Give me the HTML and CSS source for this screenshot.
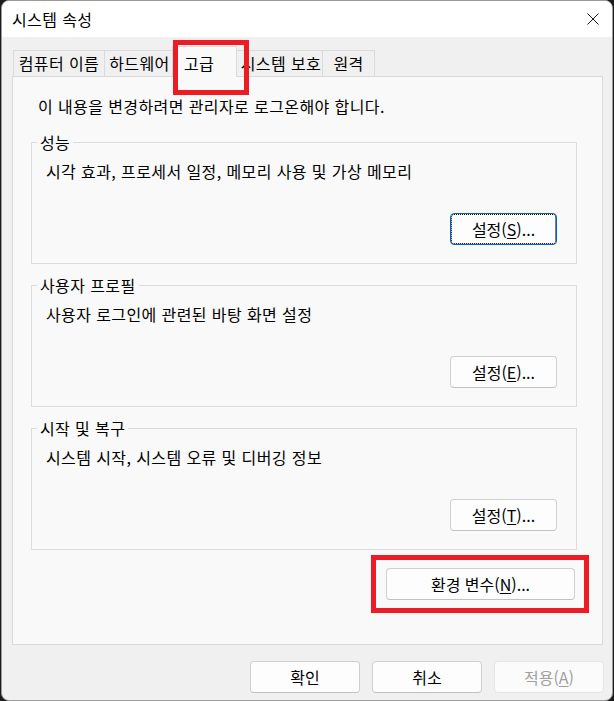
FILE: index.html
```html
<!DOCTYPE html>
<html lang="ko">
  <head>
    <meta charset="UTF-8" />
    <meta name="viewport" content="width=device-width, initial-scale=1.0" />
    <title>시스템 속성</title>
    <link rel="stylesheet" href="styles.css">
  </head>
  <body>
    <div class="window">
      <div class="titleBar">
        <span class="title">시스템 속성</span>
        <button class="closeBtn" aria-label="닫기">
          <svg width="12" height="12" viewBox="0 0 12 12">
            <path d="M0.5 0.5 L11.5 11.5 M11.5 0.5 L0.5 11.5" stroke="#1a1a1a" stroke-width="1" fill="none" />
          </svg>
        </button>
      </div>
      <div class="content">
        <div class="tabs">
          <div class="tab tabComputer">컴퓨터 이름</div>
          <div class="tab tabHardware">하드웨어</div>
          <div class="tab tabAdvanced active">고급</div>
          <div class="tab tabProtect">시스템 보호</div>
          <div class="tab tabRemote">원격</div>
        </div>
        <section class="panel">
          <p class="notice">이 내용을 변경하려면 관리자로 로그온해야 합니다.</p>
          <fieldset class="group">
            <legend>성능</legend>
            <p class="desc">시각 효과, 프로세서 일정, 메모리 사용 및 가상 메모리</p>
            <div class="groupActions">
              <button class="btn setBtn focused">설정(<u>S</u>)...</button>
            </div>
          </fieldset>
          <fieldset class="group">
            <legend>사용자 프로필</legend>
            <p class="desc">사용자 로그인에 관련된 바탕 화면 설정</p>
            <div class="groupActions">
              <button class="btn setBtn">설정(<u>E</u>)...</button>
            </div>
          </fieldset>
          <fieldset class="group">
            <legend>시작 및 복구</legend>
            <p class="desc">시스템 시작, 시스템 오류 및 디버깅 정보</p>
            <div class="groupActions">
              <button class="btn setBtn">설정(<u>T</u>)...</button>
            </div>
          </fieldset>
          <div class="envRow">
            <div class="highlight">
              <button class="btn envBtn">환경 변수(<u>N</u>)...</button>
            </div>
          </div>
        </section>
        <div class="footer">
          <button class="btn footBtn">확인</button>
          <button class="btn footBtn">취소</button>
          <button class="btn footBtn" disabled>적용(<u>A</u>)</button>
        </div>
      </div>
    </div>
  </body>
</html>
```

FILE: styles.css
```css
* {
  margin: 0;
  padding: 0;
  box-sizing: border-box;
  font-family: "Noto Sans CJK KR", "Noto Sans", sans-serif;
}

body {
  background-color: #1c1c1c;
  height: 100vh;
  overflow: hidden;
}

.window {
  width: 612px;
  height: 701px;
  margin-left: 1px;
  border: 1px solid #9b9b9b;
  border-radius: 8px;
  background-color: #f0f0f0;
  overflow: hidden;
  font-size: 16px;
  letter-spacing: 0.4px;
  line-height: 20px;
  color: #000;
  display: flex;
  flex-direction: column;
}

.titleBar {
  height: 36px;
  background-color: #fff;
  display: flex;
  align-items: center;
  justify-content: space-between;
  padding: 0 13px 0 10px;
}

.closeBtn {
  border: none;
  background: none;
  width: 12px;
  height: 12px;
  display: flex;
}

.content {
  flex: 1;
  padding: 9px 9px 0 10px;
}

/* tabs */
.tabs {
  display: flex;
  align-items: flex-end;
  height: 30px;
  margin-left: 1px;
}

.tab {
  height: 26px;
  border: 1px solid #dadada;
  border-bottom: none;
  background-color: #f0f0f0;
  text-align: center;
  line-height: 25px;
  white-space: nowrap;
  margin-left: -1px;
}

.tabComputer {
  width: 92px;
  margin-left: 0;
}

.tabHardware {
  width: 71px;
}

.tabProtect {
  width: 89px;
  padding-left: 5px;
}

.tabRemote {
  width: 53px;
}

.tab.active {
  position: relative;
  z-index: 1;
  width: 65px;
  height: 31px;
  margin: 0 -2px -1px -3px;
  background-color: #f9f9f9;
  text-align: left;
  padding: 6px 0 0 11px;
  line-height: 20px;
}

.tab.active::after {
  content: "";
  position: absolute;
  left: 0;
  top: -7px;
  width: 66px;
  height: 45px;
  border: 5px solid #ed1c24;
}

/* panel */
.panel {
  height: 569px;
  border: 1px solid #dadada;
  background-color: #f9f9f9;
  padding: 19px 25px 0 18px;
}

.notice {
  margin-left: 7px;
}

.group {
  border: 1px solid #dcdcdc;
  padding: 9px 19px 18px 5px;
  margin-top: 11px;
  & legend {
    padding: 0 3px;
  }
}

.notice + .group {
  margin-top: 16px;
}

.desc {
  margin-left: 9px;
}

.groupActions {
  display: flex;
  justify-content: flex-end;
  margin-top: 32px;
}

.btn {
  height: 32px;
  border: 1px solid #d0d0d0;
  border-bottom-color: #c2c2c2;
  border-radius: 4px;
  background-color: #fdfdfd;
  color: #000;
  font-size: 16px;
  letter-spacing: 0;
  line-height: 20px;
  white-space: nowrap;
  & u {
    text-underline-offset: 2px;
  }
}

.setBtn {
  width: 107px;
}

.btn.focused {
  border: 1px solid #0067c0;
  outline: 1px dotted #000;
  outline-offset: -2px;
}

.envRow {
  display: flex;
  justify-content: flex-end;
  margin: 5px -12px 0 0;
}

.highlight {
  border: 5px solid #ed1c24;
  padding: 8px 9px 8px 10px;
}

.envBtn {
  width: 189px;
}

/* dialog buttons */
.footer {
  display: flex;
  justify-content: flex-end;
  gap: 12px;
  margin: 16px -1px 0 0;
}

.footBtn {
  width: 110px;
}

.btn:disabled {
  background-color: #fbfbfb;
  border-color: #e5e5e5;
  color: #a0a0a0;
}
```
